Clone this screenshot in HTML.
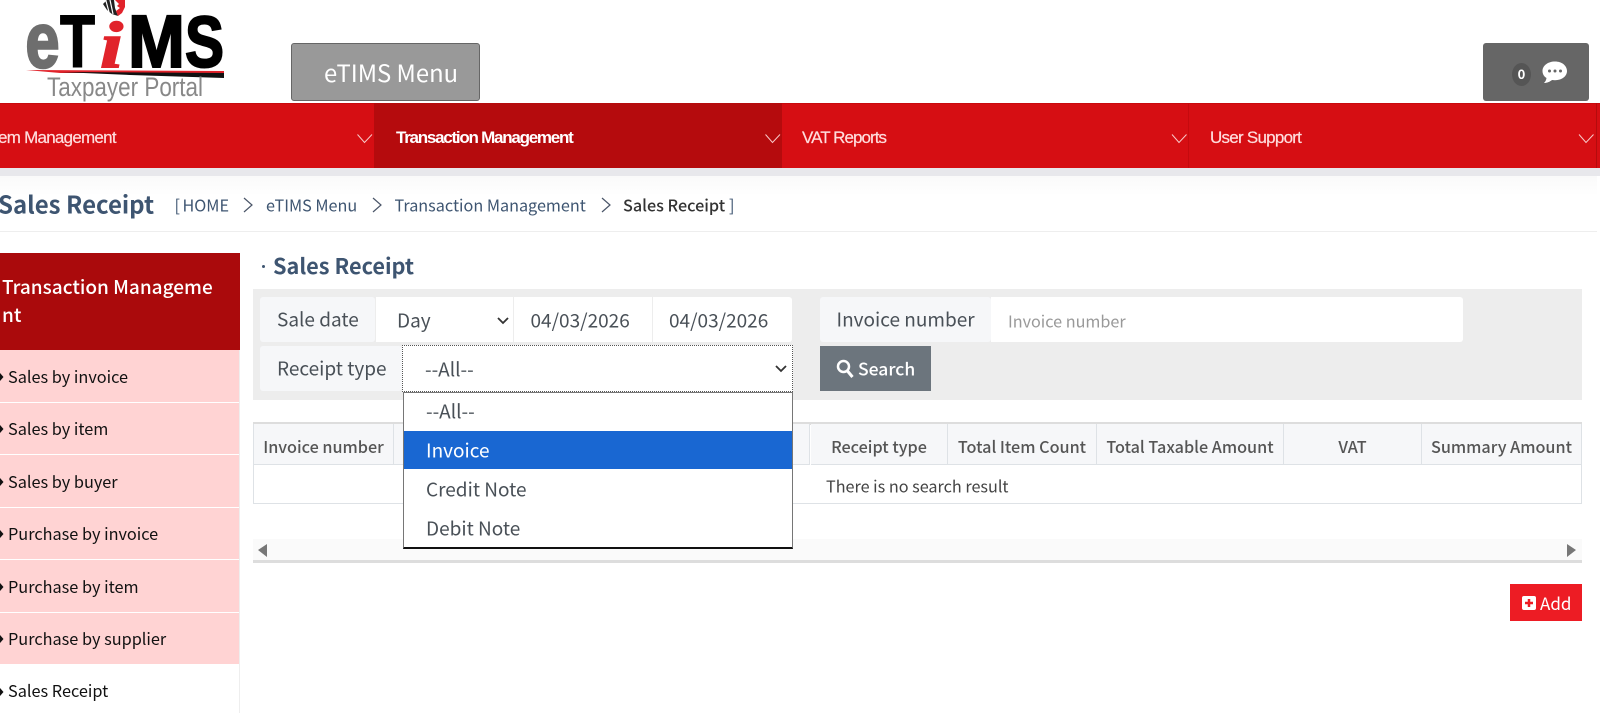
<!DOCTYPE html>
<html><head><meta charset="utf-8"><title>Sales Receipt</title>
<style>
*{box-sizing:border-box}
html,body{margin:0;padding:0;width:1600px;height:713px;overflow:hidden;background:#fff}
body{position:relative;font-family:"Noto Sans CJK KR","Liberation Sans",sans-serif;color:#495057}
.a{position:absolute;white-space:nowrap}
.t{position:absolute;white-space:nowrap;transform:translateY(-50%);line-height:1.2}
.nav{font-family:"Liberation Sans",sans-serif;font-size:17px;letter-spacing:-.75px;color:#fdd;-webkit-text-stroke:.2px #fdd}
.it{font-size:16.300px;color:#111}
.bc{font-size:16.200px;color:#3e5571}
.lb{background:#f6f7f9;border-radius:3px}
.th{position:absolute;top:424px;height:41px;background:#f6f7f9;border-right:1px solid #dee2e6;border-bottom:1px solid #dee2e6;font-size:16.200px;font-weight:500;color:#555;text-align:center;line-height:44px;white-space:nowrap}
.si{position:absolute;left:0;width:239px;background:#ffd3d3;border-bottom:1.500px solid #fff}
</style></head><body>

<!-- logo -->
<svg class="a" style="left:0;top:0" width="240" height="103" viewBox="0 0 240 103">
<path d="M103 4l4-4h7l1 8 3 8-6-2-5-4z" fill="#222"/>
<path d="M106 1l3 11M110 0l3 14" stroke="#fff" stroke-width="1.200"/>
<path d="M115 0h10l0 7-3 6-4 3-2-5 4-3-3-2 2-2z" fill="#e1232b"/>
<text x="25.500" y="67" font-family="Liberation Sans" font-weight="700" font-size="78" fill="#6e6e6e" stroke="#6e6e6e" stroke-width="2.500" textLength="34" lengthAdjust="spacingAndGlyphs">e</text>
<text x="60" y="67" font-family="Liberation Sans" font-weight="700" font-size="74" fill="#000" stroke="#000" stroke-width="1.500" textLength="35" lengthAdjust="spacingAndGlyphs">T</text>
<text x="100" y="67" font-family="Liberation Serif" font-weight="700" font-style="italic" font-size="66" fill="#e1232b" stroke="#e1232b" stroke-width="1.500" textLength="23" lengthAdjust="spacingAndGlyphs">i</text>
<text x="128" y="67" font-family="Liberation Sans" font-weight="700" font-size="74" fill="#000" stroke="#000" stroke-width="2" textLength="57" lengthAdjust="spacingAndGlyphs">M</text>
<text x="185" y="67" font-family="Liberation Sans" font-weight="700" font-size="72" fill="#000" stroke="#000" stroke-width="2" textLength="39" lengthAdjust="spacingAndGlyphs">S</text>
<path d="M26 70L224 71V73L60 73z" fill="#e1232b"/>
<path d="M60 72L224 73V78L130 75z" fill="#111"/>
<text x="47" y="96" font-family="Liberation Sans" font-size="27" fill="#888" textLength="156" lengthAdjust="spacingAndGlyphs">Taxpayer Portal</text>
</svg>

<!-- header buttons -->
<div class="a" style="left:291px;top:43px;width:189px;height:58px;background:#999;border:1px solid #666;border-radius:3px;color:#fff;font-size:23.800px;text-align:center;line-height:56px;padding-left:11px">eTIMS Menu</div>
<div class="a" style="left:1483px;top:43px;width:106px;height:58px;background:#666;border-radius:3px"></div>
<div class="a" style="left:1512px;top:63px;width:19px;height:23px;border-radius:50%;background:#555;color:#fff;font-size:13px;font-weight:700;text-align:center;line-height:22px">0</div>
<svg class="a" style="left:1541px;top:60px" width="27" height="25" viewBox="0 0 27 25"><path d="M14 1.500C7 1.500 1.500 5.500 1.500 11c0 3 1.500 5.500 4 7-.3 2-1 3.500-2.500 5 3 0 6-1.300 8-3 1 .2 2 .2 3 .2 7 0 12-4 12-9.200S21 1.500 14 1.500z" fill="#fff"/><circle cx="8.500" cy="11" r="1.500" fill="#666"/><circle cx="14" cy="11" r="1.500" fill="#666"/><circle cx="19.500" cy="11" r="1.500" fill="#666"/></svg>

<!-- nav -->
<div class="a" style="left:0;top:103px;width:1600px;height:65px;background:#d60e13;border-top:1px solid #c80a0e"></div>
<div class="a" style="left:374px;top:103px;width:408px;height:65px;background:#b50b0d"></div>
<div class="a" style="left:1188px;top:103px;width:1px;height:65px;background:#c50a0e"></div>
<div class="a" style="left:1596px;top:103px;width:1px;height:65px;background:#b50b0d"></div>
<div class="t nav" style="left:-2px;top:137.500px">em Management</div>
<div class="t nav" style="left:396px;top:137.500px;color:#fff;font-weight:700;letter-spacing:-1.250px;-webkit-text-stroke:0">Transaction Management</div>
<div class="t nav" style="left:802px;top:137.500px;letter-spacing:-.95px">VAT Reports</div>
<div class="t nav" style="left:1210px;top:137.500px">User Support</div>
<svg class="a" style="left:0;top:130px" width="1600" height="16" fill="none" stroke="#f8c9c9" stroke-width="1"><path d="M357.500 4.500l7 8 7.500-8M765.500 4.500l7 8 7.500-8M1172 4.500l7 8 7.500-8M1579 4.500l7 8 7.500-8"/></svg>

<!-- band -->
<div class="a" style="left:0;top:168px;width:1600px;height:8px;background:#e8e8ec"></div>
<div class="a" style="left:0;top:176px;width:1597px;height:20px;background:linear-gradient(#fafafa,#fff)"></div>
<div class="a" style="left:0;top:231px;width:1597px;height:1px;background:#eee"></div>

<!-- title row -->
<div class="t" style="left:-2px;top:204px;font-size:24px;font-weight:700;color:#3e5571">Sales Receipt</div>
<div class="t bc" style="left:174.500px;top:205px">[</div>
<div class="t bc" style="left:182.500px;top:205px">HOME</div>
<div class="t bc" style="left:266px;top:205px">eTIMS Menu</div>
<div class="t bc" style="left:394.500px;top:205px">Transaction Management</div>
<div class="t bc" style="left:623px;top:205px;color:#333;font-weight:500">Sales Receipt</div>
<div class="t bc" style="left:729px;top:205px">]</div>
<svg class="a" style="left:0;top:195px" width="620" height="20" fill="none" stroke="#4a5568" stroke-width="1.200"><path d="M244 3l8 7-8 7M373 3l8 7-8 7M602 3l8 7-8 7"/></svg>

<!-- sidebar -->
<div class="a" style="left:239px;top:253px;width:1px;height:460px;background:#eee"></div>
<div class="a" style="left:0;top:253px;width:240px;height:97px;background:#aa0a0c;color:#fff;font-size:19px;font-weight:500;line-height:28px;padding:20px 0 0 2px;white-space:normal">Transaction Manageme<br>nt</div>
<div class="si" style="top:350px;height:53px"></div>
<div class="si" style="top:403px;height:52px"></div>
<div class="si" style="top:455px;height:53px"></div>
<div class="si" style="top:508px;height:52px"></div>
<div class="si" style="top:560px;height:53px"></div>
<div class="si" style="top:613px;height:51px;border:0"></div>
<svg class="a" style="left:0;top:350px" width="6" height="360" fill="#111"><path d="M0 23l3.500 4-3.500 4zM0 75l3.500 4-3.500 4zM0 128l3.500 4-3.500 4zM0 180l3.500 4-3.500 4zM0 233l3.500 4-3.500 4zM0 285l3.500 4-3.500 4zM0 338l3.500 4-3.500 4z"/></svg>
<div class="t it" style="left:8px;top:376.500px">Sales by invoice</div>
<div class="t it" style="left:8px;top:428.500px">Sales by item</div>
<div class="t it" style="left:8px;top:481.500px">Sales by buyer</div>
<div class="t it" style="left:8px;top:533.500px">Purchase by invoice</div>
<div class="t it" style="left:8px;top:586.500px">Purchase by item</div>
<div class="t it" style="left:8px;top:638.500px">Purchase by supplier</div>
<div class="t it" style="left:8px;top:691px">Sales Receipt</div>

<!-- section title -->
<div class="a" style="left:262px;top:265px;width:3px;height:3px;border-radius:50%;background:#3e5571"></div>
<div class="t" style="left:273px;top:265.500px;font-size:21.700px;font-weight:700;color:#3e5571">Sales Receipt</div>

<!-- search panel -->
<div class="a" style="left:253px;top:289px;width:1329px;height:111px;background:#ededed"></div>
<div class="a lb" style="left:260px;top:297px;width:115px;height:45px"></div>
<div class="a" style="left:376px;top:297px;width:137px;height:45px;background:#fff"></div>
<div class="a" style="left:514px;top:297px;width:138px;height:45px;background:#fff"></div>
<div class="a" style="left:653px;top:297px;width:139px;height:45px;background:#fff;border-radius:0 3px 3px 0"></div>
<div class="t" style="left:277px;top:320px;font-size:19px;color:#495057">Sale date</div>
<div class="t" style="left:397px;top:321px;font-size:19px;color:#495057">Day</div>
<svg class="a" style="left:496px;top:316px" width="14" height="10" fill="none" stroke="#333" stroke-width="1.800"><path d="M2 2l5 5 5-5"/></svg>
<div class="t" style="left:530.500px;top:321px;font-size:19px;color:#495057">04/03/2026</div>
<div class="t" style="left:669px;top:321px;font-size:19px;color:#495057">04/03/2026</div>

<div class="a lb" style="left:820px;top:297px;width:171px;height:45px"></div>
<div class="a" style="left:991px;top:297px;width:472px;height:45px;background:#fff;border-radius:0 3px 3px 0"></div>
<div class="t" style="left:836.500px;top:320px;font-size:19px;color:#495057">Invoice number</div>
<div class="t" style="left:1008px;top:321px;font-size:16.200px;color:#999">Invoice number</div>

<div class="a lb" style="left:260px;top:346px;width:142px;height:45px"></div>
<div class="t" style="left:277px;top:369px;font-size:19px;color:#495057">Receipt type</div>
<div class="a" style="left:402px;top:345px;width:391px;height:47px;background:#fff;border:1px dotted #555"></div>
<div class="t" style="left:425px;top:370px;font-size:19px;color:#495057">--All--</div>
<svg class="a" style="left:774px;top:364px" width="14" height="10" fill="none" stroke="#333" stroke-width="1.800"><path d="M2 2l5 5 5-5"/></svg>

<div class="a" style="left:820px;top:346px;width:111px;height:45px;background:#6c757d;color:#fff"></div>
<svg class="a" style="left:836px;top:359px" width="18" height="20" viewBox="0 0 18 20" fill="none" stroke="#fff"><circle cx="7.500" cy="7.500" r="5.500" stroke-width="2.500"/><path d="M11.500 12l5 6" stroke-width="3"/></svg>
<div class="t" style="left:858px;top:369px;font-size:17.500px;font-weight:500;color:#fff">Search</div>

<!-- table -->
<div class="a" style="left:253px;top:422px;width:1329px;height:3px;background:#ddd"></div>
<div class="th" style="left:253px;width:141px;border-left:1px solid #dee2e6">Invoice number</div>
<div class="th" style="left:394px;width:416px"></div>
<div class="th" style="left:811px;width:137px">Receipt type</div>
<div class="th" style="left:948px;width:149px">Total Item Count</div>
<div class="th" style="left:1097px;width:187px">Total Taxable Amount</div>
<div class="th" style="left:1284px;width:138px">VAT</div>
<div class="th" style="left:1422px;width:160px">Summary Amount</div>
<div class="a" style="left:253px;top:465px;width:1329px;height:39px;border:1px solid #dee2e6;border-top:0"></div>
<div class="t" style="left:826px;top:486px;font-size:16.200px;color:#444">There is no search result</div>

<div class="a" style="left:253px;top:539px;width:1329px;height:21px;background:#fafafa"></div>
<div class="a" style="left:253px;top:560px;width:1329px;height:3px;background:#ddd"></div>
<svg class="a" style="left:253px;top:540px" width="1329" height="20" fill="#777"><path d="M5 10l9-6v13zM1314 4l9 6-9 7z"/></svg>

<!-- dropdown -->
<div class="a" style="left:403px;top:392px;width:390px;height:157px;background:#fff;border:1px solid #767676;border-bottom:2px solid #111"></div>
<div class="a" style="left:404px;top:431px;width:388px;height:38px;background:#1967d2"></div>
<div class="t" style="left:426px;top:412px;font-size:19px;color:#495057">--All--</div>
<div class="t" style="left:426px;top:451px;font-size:19px;color:#fff">Invoice</div>
<div class="t" style="left:426px;top:490px;font-size:19px;color:#495057">Credit Note</div>
<div class="t" style="left:426px;top:529px;font-size:19px;color:#495057">Debit Note</div>

<!-- add -->
<div class="a" style="left:1510px;top:584px;width:72px;height:37px;background:#ed1c24"></div>
<svg class="a" style="left:1522px;top:596px" width="14" height="14" viewBox="0 0 14 14"><rect width="14" height="14" rx="2" fill="#fff"/><path d="M7 3v8M3 7h8" stroke="#ed1c24" stroke-width="2.500"/></svg>
<div class="t" style="left:1540px;top:603px;font-size:17px;color:#fff">Add</div>

</body></html>
